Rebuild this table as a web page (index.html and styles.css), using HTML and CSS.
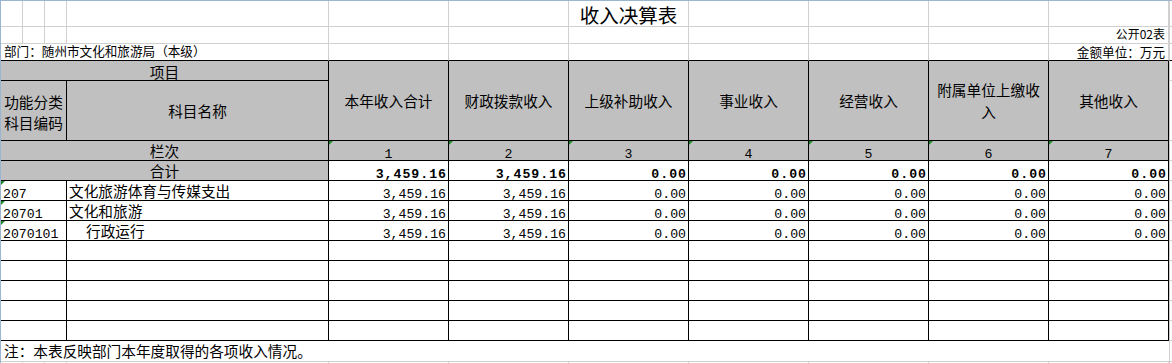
FILE: index.html
```html
<!DOCTYPE html>
<html lang="zh-CN">
<head>
<meta charset="utf-8">
<title>收入决算表</title>
<link rel="stylesheet" href="styles.css">
</head>
<body>
<div class="sheet">
<table class="grid">
<colgroup>
<col class="c-n"><col class="c-n"><col class="c-n"><col class="c-name">
<col class="c-v"><col class="c-v"><col class="c-v"><col class="c-v"><col class="c-v"><col class="c-v"><col class="c-v">
<col class="c-edge">
</colgroup>
<tr class="r-title">
<td></td><td></td><td></td><td></td>
<td></td><td></td><td class="title">收入决算表</td><td></td><td></td><td></td><td></td><td class="edge"></td>
</tr>
<tr class="r-small">
<td></td><td></td><td></td><td></td>
<td></td><td></td><td></td><td></td><td></td><td></td><td class="small right pub">公开02表</td><td class="edge"></td>
</tr>
<tr class="r-small r-above">
<td colspan="4" class="small dept">部门：随州市文化和旅游局（本级）</td>
<td></td><td></td><td></td><td></td><td></td><td></td><td class="small right unit">金额单位：万元</td><td class="edge"></td>
</tr>
<tr class="r20">
<td colspan="4" class="h item">项目</td>
<td rowspan="2" class="h">本年收入合计</td>
<td rowspan="2" class="h">财政拨款收入</td>
<td rowspan="2" class="h">上级补助收入</td>
<td rowspan="2" class="h">事业收入</td>
<td rowspan="2" class="h">经营收入</td>
<td rowspan="2" class="h two">附属单位上缴收<br>入</td>
<td rowspan="2" class="h">其他收入</td>
<td class="edge"></td>
</tr>
<tr class="r60">
<td colspan="3" class="h two code-h">功能分类<br>科目编码</td>
<td class="h">科目名称</td>
<td class="edge"></td>
</tr>
<tr class="r20">
<td colspan="4" class="h">栏次</td>
<td class="h num-c tri">1</td><td class="h num-c tri">2</td><td class="h num-c tri">3</td><td class="h num-c tri">4</td><td class="h num-c tri">5</td><td class="h num-c tri">6</td><td class="h num-c tri">7</td>
<td class="edge"></td>
</tr>
<tr class="r20">
<td colspan="4" class="h">合计</td>
<td class="d num bold">3,459.16</td><td class="d num bold">3,459.16</td><td class="d num bold">0.00</td><td class="d num bold">0.00</td><td class="d num bold">0.00</td><td class="d num bold">0.00</td><td class="d num bold">0.00</td>
<td class="edge"></td>
</tr>
<tr class="r20">
<td colspan="3" class="d code tri">207</td><td class="d">文化旅游体育与传媒支出</td>
<td class="d num">3,459.16</td><td class="d num">3,459.16</td><td class="d num">0.00</td><td class="d num">0.00</td><td class="d num">0.00</td><td class="d num">0.00</td><td class="d num">0.00</td>
<td class="edge"></td>
</tr>
<tr class="r20">
<td colspan="3" class="d code tri">20701</td><td class="d">文化和旅游</td>
<td class="d num">3,459.16</td><td class="d num">3,459.16</td><td class="d num">0.00</td><td class="d num">0.00</td><td class="d num">0.00</td><td class="d num">0.00</td><td class="d num">0.00</td>
<td class="edge"></td>
</tr>
<tr class="r20">
<td colspan="3" class="d code tri">2070101</td><td class="d ind">行政运行</td>
<td class="d num">3,459.16</td><td class="d num">3,459.16</td><td class="d num">0.00</td><td class="d num">0.00</td><td class="d num">0.00</td><td class="d num">0.00</td><td class="d num">0.00</td>
<td class="edge"></td>
</tr>
<tr class="r20">
<td colspan="3" class="d"></td><td class="d"></td>
<td class="d"></td><td class="d"></td><td class="d"></td><td class="d"></td><td class="d"></td><td class="d"></td><td class="d"></td>
<td class="edge"></td>
</tr>
<tr class="r20">
<td colspan="3" class="d"></td><td class="d"></td>
<td class="d"></td><td class="d"></td><td class="d"></td><td class="d"></td><td class="d"></td><td class="d"></td><td class="d"></td>
<td class="edge"></td>
</tr>
<tr class="r20">
<td colspan="3" class="d"></td><td class="d"></td>
<td class="d"></td><td class="d"></td><td class="d"></td><td class="d"></td><td class="d"></td><td class="d"></td><td class="d"></td>
<td class="edge"></td>
</tr>
<tr class="r20">
<td colspan="3" class="d"></td><td class="d"></td>
<td class="d"></td><td class="d"></td><td class="d"></td><td class="d"></td><td class="d"></td><td class="d"></td><td class="d"></td>
<td class="edge"></td>
</tr>
<tr class="r20">
<td colspan="3" class="d"></td><td class="d"></td>
<td class="d"></td><td class="d"></td><td class="d"></td><td class="d"></td><td class="d"></td><td class="d"></td><td class="d"></td>
<td class="edge"></td>
</tr>
<tr class="r-note">
<td colspan="11" class="note">注：本表反映部门本年度取得的各项收入情况。</td>
<td class="edge"></td>
</tr>
<tr class="r-last">
<td></td><td></td><td></td><td></td>
<td></td><td></td><td></td><td></td><td></td><td></td><td></td><td class="edge"></td>
</tr>
</table>
</div>
</body>
</html>
```

FILE: styles.css
```css
* { box-sizing: border-box; }
html, body {
  margin: 0;
  padding: 0;
  background: #fff;
  overflow: hidden;
}
body {
  width: 1172px;
  height: 363px;
  font-family: "Noto Sans CJK SC", "Noto Sans", sans-serif;
  font-size: 14.67px;
  color: #000;
}
.sheet {
  border-top: 1px solid #9bb5d1;
  border-left: 1px solid #9bb5d1;
  width: 1172px;
}
.grid {
  border-collapse: separate;
  border-spacing: 0;
  table-layout: fixed;
  width: 1171px;
}
col.c-n { width: 22px; }
col.c-name { width: 262px; }
col.c-v { width: 120px; }
col.c-edge { width: 3px; }

.grid td {
  padding: 0 2px;
  border-right: 1px solid #d0d0d0;
  border-bottom: 1px solid #d0d0d0;
  white-space: nowrap;
  overflow: visible;
  line-height: 16px;
  vertical-align: middle;
}
.r-title { height: 26px; }
.r-small { height: 17px; }
.r20 { height: 20px; }
.r60 { height: 60px; }
.r-note { height: 21px; }
.r-last { height: 3px; }

.grid .title {
  font-size: 19.5px;
  text-align: center;
  vertical-align: bottom;
  line-height: 22px;
  padding: 0;
}
.grid .small {
  font-size: 12.6px;
  line-height: 15px;
  vertical-align: bottom;
  padding: 0 3px;
}
.grid .dept {
  vertical-align: top;
  line-height: 14px;
}
.grid .pub {
  font-size: 12px;
  vertical-align: top;
  line-height: 14px;
}
.grid .unit {
  vertical-align: top;
  line-height: 16px;
}
.grid .right { text-align: right; }
.r-above td { border-bottom-color: #000; }

.grid .h {
  background: #c0c0c0;
  border-right-color: #000;
  border-bottom-color: #000;
  text-align: center;
  white-space: normal;
}
.grid .item {
  vertical-align: bottom;
}
.grid .two { line-height: 21.5px; }
.grid .code-h { padding-top: 3px; }
.grid .d {
  border-right-color: #000;
  border-bottom-color: #000;
}
.grid .num, .grid .num-c, .grid .code {
  font-family: "Liberation Mono", "DejaVu Sans Mono", monospace;
  font-size: 13.2px;
  line-height: 11px;
  vertical-align: bottom;
}
.grid .num {
  text-align: right;
  padding-right: 2px;
}
.grid .num.bold {
  font-weight: bold;
  letter-spacing: 1px;
  padding-right: 1px;
}
.grid .code { padding-left: 2px; }
.grid .ind { padding-left: 19px; }
.tri { position: relative; }
.tri::before {
  content: "";
  position: absolute;
  left: 0;
  top: 0;
  border-top: 4px solid #1c8a2a;
  border-right: 4px solid transparent;
}
.grid .note {
  border-right: none;
  padding-left: 3px;
}
.grid .edge {
  border-right: none;
  border-left: 1px solid #d0d0d0;
  padding: 0;
}
.grid .r-note .edge { border-bottom-color: #d0d0d0; }
```
